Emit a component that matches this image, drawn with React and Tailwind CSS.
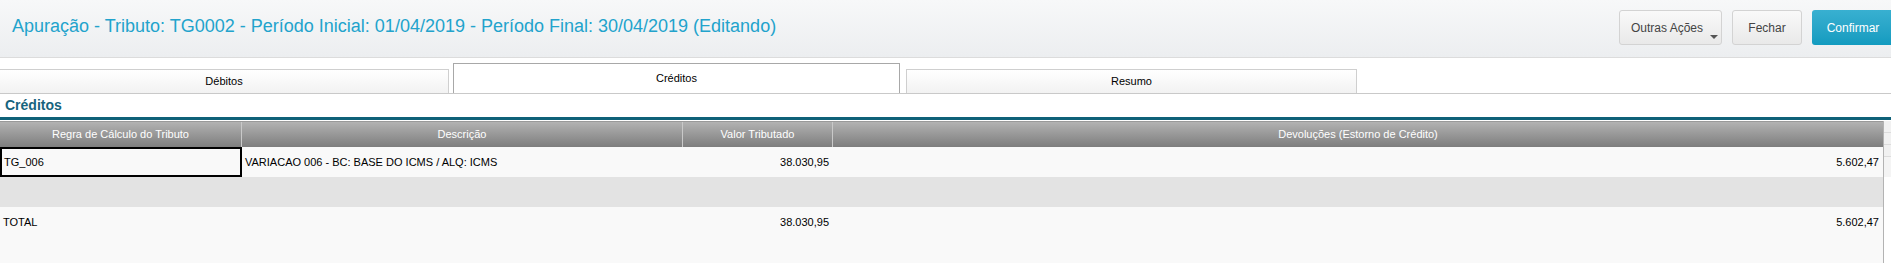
export default function App() {
  const headers = [
    "Regra de Cálculo do Tributo",
    "Descrição",
    "Valor Tributado",
    "Devoluções (Estorno de Crédito)",
  ];
  return (
    <div className="w-[1891px] h-[263px] overflow-hidden bg-white font-['Liberation_Sans',Arial,sans-serif] text-black flex flex-col">
      {/* Header */}
      <div className="h-[58px] shrink-0 flex items-center justify-between border-b border-[#dcdcdc] bg-gradient-to-b from-[#f7f8f9] to-[#eceef0] overflow-hidden">
        <div className="pl-[12px] pb-[5px] text-[18px] leading-none text-[#22a3cc] whitespace-nowrap">
          Apuração - Tributo: TG0002 - Período Inicial: 01/04/2019 - Período Final: 30/04/2019 (Editando)
        </div>
        <div className="flex items-center gap-[10px] mr-[-3px] pb-[2px]">
          <button className="relative h-[35px] w-[103px] rounded-[3px] border border-[#d3d3d3] bg-gradient-to-b from-[#f9f9f9] to-[#e9e9e9] text-[12px] text-[#444] text-left pl-[11px]">
            Outras Ações
            <span className="absolute right-[3px] bottom-[5px] w-0 h-0 border-l-[4px] border-r-[4px] border-t-[4px] border-l-transparent border-r-transparent border-t-[#555]" />
          </button>
          <button className="h-[35px] w-[70px] rounded-[3px] border border-[#d3d3d3] bg-gradient-to-b from-[#f9f9f9] to-[#e9e9e9] text-[12px] text-[#444]">
            Fechar
          </button>
          <button className="h-[35px] w-[82px] rounded-[3px] bg-gradient-to-b from-[#38b0d1] to-[#129bbf] text-[12px] text-white">
            Confirmar
          </button>
        </div>
      </div>

      {/* Tabs */}
      <div className="h-[36px] shrink-0 flex items-end border-b border-[#c9c9c9]">
        <div className="w-[449px] h-[24px] flex items-center justify-center border-t border-r border-[#cfcfcf] bg-gradient-to-b from-white to-[#f2f2f2] text-[11px]">
          Débitos
        </div>
        <div className="ml-[4px] w-[447px] h-[30px] flex items-center justify-center border border-b-0 border-[#a8a8a8] bg-white text-[11px]">
          Créditos
        </div>
        <div className="ml-[6px] w-[451px] h-[24px] flex items-center justify-center border-t border-l border-r border-[#cfcfcf] bg-gradient-to-b from-white to-[#f2f2f2] text-[11px]">
          Resumo
        </div>
      </div>

      {/* Section title */}
      <div className="h-[26px] shrink-0 flex items-center pl-[5px] border-b-[3px] border-[#0f6178] text-[14px] font-bold text-[#17637d]">
        Créditos
      </div>

      {/* Table */}
      <div className="flex flex-1 mt-[1px] min-h-0">
        <div className="w-[1884px] border-r border-[#b3b3b3] flex flex-col bg-[#f9f9f9]">
          <div className="grid grid-cols-[242px_441px_150px_1050px] h-[26px] border-t border-[#999]">
            {headers.map((h, i) => (
              <div
                key={h}
                className={
                  "flex items-center justify-center text-[11px] text-white bg-gradient-to-b from-[#b2b2b2] to-[#7e7e7e] " +
                  (i < 3 ? "border-r border-[#c9c9c9]" : "")
                }
              >
                {h}
              </div>
            ))}
          </div>
          <div className="grid grid-cols-[242px_441px_150px_1050px] h-[30px] text-[11px] bg-[#f9f9f9]">
            <div className="border-2 border-black flex items-center pl-[2px]">TG_006</div>
            <div className="flex items-center pl-[3px]">VARIACAO 006 - BC: BASE DO ICMS / ALQ: ICMS</div>
            <div className="flex items-center justify-end pr-[4px]">38.030,95</div>
            <div className="flex items-center justify-end pr-[4px]">5.602,47</div>
          </div>
          <div className="h-[30px] bg-[#e3e3e3]" />
          <div className="grid grid-cols-[242px_441px_150px_1050px] h-[30px] text-[11px] bg-[#f9f9f9]">
            <div className="flex items-center pl-[3px]">TOTAL</div>
            <div />
            <div className="flex items-center justify-end pr-[4px]">38.030,95</div>
            <div className="flex items-center justify-end pr-[4px]">5.602,47</div>
          </div>
          <div className="flex-1 bg-[#f9f9f9]" />
        </div>
        <div className="w-[7px] flex flex-col bg-white">
          <div className="h-[12px] bg-[#f1f1f1] border-b border-[#dcdcdc]" />
          <div className="h-[12px] bg-[#f1f1f1] border-b border-[#dcdcdc]" />
          <div className="h-[12px] bg-[#f1f1f1] border-b border-[#dcdcdc]" />
          <div className="h-[20px] bg-[#f4f4f4]" />
        </div>
      </div>
    </div>
  );
}
